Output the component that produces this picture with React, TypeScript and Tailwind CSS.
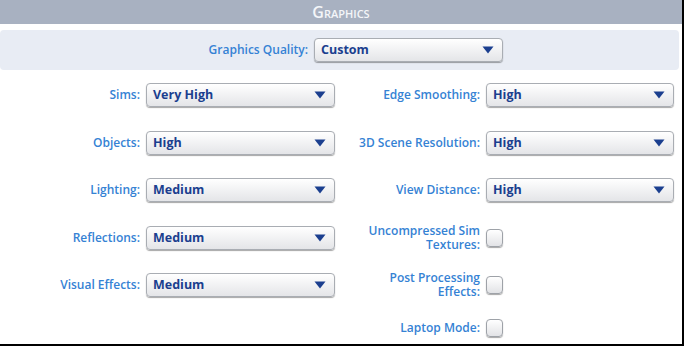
import type { ReactNode } from "react";

const font = { fontFamily: '"Open Sans", "Liberation Sans", sans-serif' };

const Caret = () => (
  <svg width="12" height="8" viewBox="0 0 12 8" className="shrink-0">
    <path d="M0.5 0.5 L11.5 0.5 L6 7.5 Z" fill="#1b3f8f" />
  </svg>
);

const Select = ({ value, wide = "w-[189px]" }: { value: string; wide?: string }) => (
  <div
    className={`${wide} h-[24px] flex items-center justify-between pl-[6px] pr-[8px] rounded-[4px] border border-[#a9adb3] bg-gradient-to-b from-white to-[#e4e5e8] shadow-[0_1px_1px_rgba(0,0,0,0.35)]`}
  >
    <span className="text-[12.5px] font-bold text-[#1b3f8f] leading-none">{value}</span>
    <Caret />
  </div>
);

const Check = () => (
  <div className="w-[17px] h-[18px] rounded-[4px] border border-[#9ea2a8] bg-gradient-to-b from-white to-[#e2e3e6] shadow-[0_1px_1px_rgba(0,0,0,0.35)]" />
);

const Row = ({ label, children, h = "h-[47.5px]" }: { label: ReactNode; children: ReactNode; h?: string }) => (
  <div className={`${h} flex items-center gap-[6px]`}>
    <div className="w-[140px] flex flex-col items-end text-right text-[12px] font-semibold leading-[14px] text-[#3582d4]">{label}</div>
    {children}
  </div>
);

export default function App() {
  return (
    <div style={font} className="w-[684px] h-[346px] bg-white border-r-2 border-b-2 border-black overflow-hidden">
      {/* header */}
      <div className="h-[24px] bg-[#a8b1c1] flex items-center justify-center">
        <span className="text-[16px] font-semibold text-[#f4f6f9] [font-variant:small-caps] leading-none">
          Graphics
        </span>
      </div>

      {/* quality band */}
      <div className="mt-[6px] w-[679px] h-[40px] rounded-[4px] bg-[#e8ecf4] flex items-center">
        <div className="w-[308px] text-right text-[12px] font-semibold text-[#3582d4]">Graphics Quality:</div>
        <div className="ml-[6px]">
          <Select value="Custom" />
        </div>
      </div>

      {/* settings */}
      <div className="flex pt-[1.5px]">
        <div className="w-[340px] flex flex-col">
          <Row label="Sims:"><Select value="Very High" /></Row>
          <Row label="Objects:"><Select value="High" /></Row>
          <Row label="Lighting:"><Select value="Medium" /></Row>
          <Row label="Reflections:"><Select value="Medium" /></Row>
          <Row label="Visual Effects:"><Select value="Medium" /></Row>
        </div>
        <div className="flex flex-col">
          <Row label="Edge Smoothing:"><Select value="High" wide="w-[188px]" /></Row>
          <Row label="3D Scene Resolution:"><Select value="High" wide="w-[188px]" /></Row>
          <Row label="View Distance:"><Select value="High" wide="w-[188px]" /></Row>
          <Row label={<><span>Uncompressed Sim</span><span>Textures:</span></>}><Check /></Row>
          <Row label={<><span>Post Processing</span><span>Effects:</span></>}><Check /></Row>
          <Row label="Laptop Mode:" h="h-[37px]"><Check /></Row>
        </div>
      </div>
    </div>
  );
}
